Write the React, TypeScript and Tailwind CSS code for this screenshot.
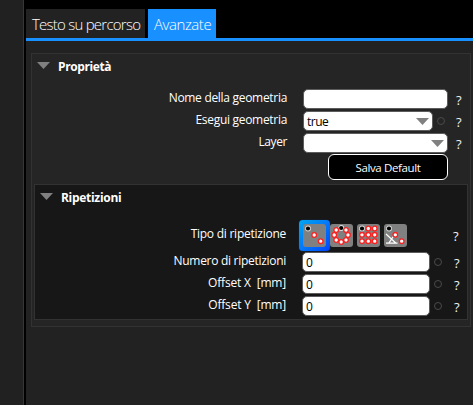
import React from "react";

const font = "font-['Segoe_UI','Open_Sans','Noto_Sans',sans-serif]";

function Triangle({ className = "" }: { className?: string }) {
  return (
    <svg width="13" height="7" viewBox="0 0 13 7" className={`shrink-0 ${className}`}>
      <path d="M0 0H13L6.5 7Z" fill="#808080" />
    </svg>
  );
}

function Dot() {
  return <span className="size-2 shrink-0 rounded-full border border-[#4a4a4a]" />;
}

function Help({ className = "" }: { className?: string }) {
  return <span className={`pt-0.5 text-[13px] leading-4 text-[#f0f0f0] ${className}`}>?</span>;
}

type Point = [number, number];

function PatternIcon({ points, children }: { points: Point[]; children?: React.ReactNode }) {
  return (
    <svg width="23" height="23" viewBox="0 0 23 23" className="block">
      <rect width="23" height="23" rx="3" fill="#808080" />
      {children}
      {points.map(([x, y], i) => (
        <circle key={i} cx={x} cy={y} r="2.3" fill="#fff" stroke={i === 0 ? "#ddd" : "#ff1f1f"} strokeWidth="1.3" />
      ))}
      <circle cx={points[0][0]} cy={points[0][1]} r="2.1" fill="#000" />
    </svg>
  );
}

const fields = [
  { label: "Numero di ripetizioni", tracking: "tracking-[-0.29px]" },
  { label: "Offset X  [mm]", tracking: "tracking-[-0.18px]" },
  { label: "Offset Y  [mm]", tracking: "tracking-[-0.18px]" },
];

export default function App() {
  return (
    <div className={`flex h-[405px] w-[473px] overflow-hidden bg-black text-[12px] text-white ${font}`}>
      <div className="w-6 shrink-0 border-r border-[#363636] bg-[#212121]" />
      <div className="ml-0.5 flex w-[447px] flex-col pt-[9px]">
        <div className="flex h-[29px] shrink-0 gap-[3px] text-[15px] font-light leading-[31px]">
          <div className="w-[119px] whitespace-nowrap bg-[#222] pl-[6px] tracking-[-0.76px]">Testo su percorso</div>
          <div className="w-[68px] whitespace-nowrap bg-[#1890ff] pl-[6px] tracking-[-0.45px]">Avanzate</div>
        </div>
        <div className="h-[3px] shrink-0 bg-[#1890ff]" />
        <div className="grow bg-[#222] pl-[5px] pt-3">
          <div className="flex h-[274px] w-[440px] flex-col border border-[#323232] bg-[#252525] px-0.5">
            <div className="flex h-[34px] items-start pl-[3px]">
              <Triangle className="mt-2" />
              <span className="ml-2 mt-[5px] font-bold leading-4 tracking-[-0.4px]">Proprietà</span>
            </div>
            <div className="flex h-[22px] items-center">
              <span className="w-[253px] pb-0.5 text-right leading-4 tracking-[-0.3px]">Nome della geometria</span>
              <span className="ml-[16px] h-5 w-[145px] rounded-[5px] border border-[#5c5c5c] bg-white" />
              <Help className="ml-2" />
            </div>
            <div className="flex h-[22px] items-center">
              <span className="w-[253px] pb-0.5 text-right leading-4 tracking-[-0.3px]">Esegui geometria</span>
              <span className="ml-[16px] flex h-5 w-[130px] items-center justify-between rounded-[5px] border border-[#5c5c5c] bg-white px-[3px] text-black">
                <span className="pt-0.5 tracking-[-0.5px]">true</span>
                <Triangle />
              </span>
              <span className="flex w-[15px] pl-1">
                <Dot />
              </span>
              <Help className="ml-2" />
            </div>
            <div className="flex h-[22px] items-center">
              <span className="w-[253px] pb-0.5 text-right leading-4 tracking-[-0.4px]">Layer</span>
              <span className="ml-[16px] flex h-5 w-[145px] items-center justify-end rounded-[5px] border border-[#5c5c5c] bg-white pr-[3px]">
                <Triangle />
              </span>
              <Help className="ml-2" />
            </div>
            <div className="flex h-[30px] pl-[294px]">
              <button className="h-[26px] w-[120px] rounded-[6px] border border-white bg-black pt-px text-[11.5px] tracking-[-0.38px]">
                Salva Default
              </button>
            </div>
            <div className="h-[136px] w-[434px] border border-[#323232] bg-[#171717]">
              <div className="flex h-[34px] items-start pl-[5px]">
                <Triangle className="mt-2" />
                <span className="ml-2 mt-[5px] font-bold leading-4 tracking-[-0.3px]">Ripetizioni</span>
              </div>
              <div className="flex h-8 items-center">
                <span className="w-[251px] pb-0.5 text-right leading-4 tracking-[-0.25px]">Tipo di ripetizione</span>
                <div className="ml-[13px] flex w-[108px] shrink-0 items-center">
                  <div className="rounded-[4px] bg-gradient-to-br from-[#0aa5ee] via-[#0878f8] to-[#0040ff] p-1 shadow-[0_0_1px_#0050c0]">
                    <PatternIcon points={[[5, 4.5], [11.2, 11], [17.7, 17.2]]} />
                  </div>
                  <div className="flex gap-1">
                    <PatternIcon points={[[11.2, 4], [16, 6], [18, 11], [16, 16], [11.2, 18], [6.2, 16], [4.2, 11], [6.2, 6]]} />
                    <PatternIcon points={[[5, 4.5], [11.3, 4.5], [17.7, 4.5], [5, 10.8], [11.3, 10.8], [17.7, 10.8], [5, 17.2], [11.3, 17.2], [17.7, 17.2]]} />
                    <PatternIcon points={[[5, 4.5], [11.3, 10.8], [17.7, 17.2]]}>
                      <path d="M2 19.2H13.5M2 10L12 19.2M9.3 12.5L4.8 19.2" stroke="#fff" strokeWidth="1.2" fill="none" />
                    </PatternIcon>
                  </div>
                </div>
                <Help className="ml-[46px]" />
              </div>
              {fields.map((f) => (
                <div key={f.label} className="flex h-[22px] items-center">
                  <span className={`w-[251px] whitespace-pre pb-[3px] text-right leading-4 ${f.tracking}`}>{f.label}</span>
                  <span className="ml-[16px] flex h-5 w-32 items-center rounded-[5px] border border-[#5c5c5c] bg-white pl-[3px] pt-0.5 text-black">0</span>
                  <span className="flex w-4 pl-1">
                    <Dot />
                  </span>
                  <Help className="ml-2" />
                </div>
              ))}
            </div>
          </div>
        </div>
      </div>
    </div>
  );
}
